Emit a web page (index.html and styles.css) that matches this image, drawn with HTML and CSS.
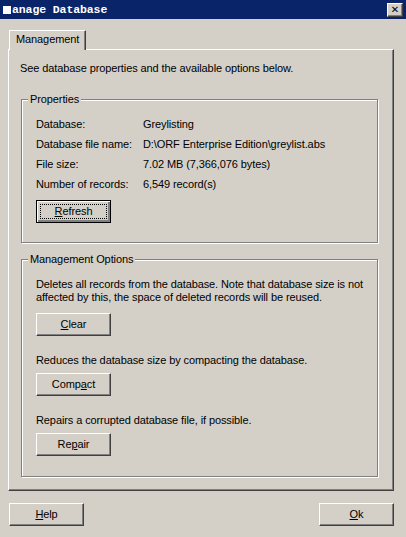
FILE: index.html
```html
<!DOCTYPE html>
<html>

<head>
    <meta charset="utf-8">
    <title>Manage Database</title>
    <link rel="stylesheet" href="styles.css">
</head>

<body>
    <div class="titlebar">
        <span class="title"><span class="cap">M</span>anage Database</span>
        <span class="close">&#x2715;</span>
    </div>

    <div class="dialog">
        <div class="tabs">
            <div class="tab">Management</div>
        </div>

        <div class="panel">
            <p class="intro">See database properties and the available options below.</p>

            <div class="group props">
                <span class="group-title">Properties</span>
                <div class="row"><span class="label">Database:</span><span>Greylisting</span></div>
                <div class="row"><span class="label">Database file name:</span><span>D:\ORF Enterprise Edition\greylist.abs</span></div>
                <div class="row"><span class="label">File size:</span><span>7.02 MB (7,366,076 bytes)</span></div>
                <div class="row"><span class="label">Number of records:</span><span>6,549 record(s)</span></div>
                <button class="btn default"><span class="focus"><u>R</u>efresh</span></button>
            </div>

            <div class="group options">
                <span class="group-title">Management Options</span>
                <p class="desc first">Deletes all records from the database. Note that database size is not<br>affected by this, the space of deleted records will be reused.</p>
                <button class="btn btn-clear"><u>C</u>lear</button>
                <p class="desc">Reduces the database size by compacting the database.</p>
                <button class="btn">Comp<u>a</u>ct</button>
                <p class="desc">Repairs a corrupted database file, if possible.</p>
                <button class="btn">Re<u>p</u>air</button>
            </div>
        </div>

        <div class="footer">
            <button class="btn"><u>H</u>elp</button>
            <button class="btn"><u>O</u>k</button>
        </div>
    </div>
</body>

</html>
```

FILE: styles.css
```css
/* classic windows dialog colours */
:root {
    --face: #d4d0c8;
    --light: #ffffff;
    --shadow: #808080;
    --dark: #404040;
    --caption: #0a246a;
}

body {
    margin: 0;
    background-color: var(--face);
    font-family: "Liberation Sans", Arial, sans-serif;
    font-size: 11px;
    line-height: 13px;
    letter-spacing: -0.1px;
    color: #000;
}

p {
    margin: 0;
}

.titlebar {
    height: 19px;
    background-color: var(--caption);
    display: flex;
    align-items: center;
    justify-content: space-between;
    padding: 0 3px 0 3px;
}

.title {
    font-family: "Liberation Mono", monospace;
    font-weight: bold;
    font-size: 11.5px;
    color: #fff;
    letter-spacing: -0.1px;
}

.title .cap {
    display: inline-block;
    width: 8px;
    height: 8px;
    line-height: 8px;
    margin-right: 1px;
    background-color: #fff;
    color: #fff;
}

.close {
    width: 14px;
    height: 12px;
    background-color: var(--face);
    border: 1px solid;
    border-color: var(--light) var(--dark) var(--dark) var(--light);
    box-shadow: inset -1px -1px var(--shadow);
    font-size: 10px;
    line-height: 12px;
    font-weight: bold;
    text-align: center;
    font-family: "DejaVu Sans", sans-serif;
}

.dialog {
    padding: 11px 12px 0 8px;
}

.tabs {
    display: flex;
    padding-left: 1px;
}

.tab {
    position: relative;
    width: 77px;
    box-sizing: border-box;
    height: 20px;
    padding: 2px 0 0 6px;
    margin-bottom: -1px;
    background-color: var(--face);
    border: 1px solid;
    border-bottom: none;
    border-color: var(--light) var(--dark) transparent var(--light);
    box-shadow: inset -1px 0 var(--shadow);
}

.panel {
    height: 442px;
    box-sizing: border-box;
    border: 1px solid;
    border-color: var(--light) var(--dark) var(--dark) var(--light);
    box-shadow: inset -1px -1px var(--shadow);
    padding-top: 12px;
}

.intro {
    padding-left: 11px;
}

.group {
    margin: 24px 15px 0 12px;
    border: 1px solid var(--shadow);
    box-shadow: inset 1px 1px var(--light), 1px 1px var(--light);
    padding: 0 0 0 14px;
}

.group-title {
    display: block;
    width: fit-content;
    height: 13px;
    margin: -7px 0 0 -8px;
    padding: 0 2px;
    background-color: var(--face);
}

.props {
    padding-bottom: 19px;
}

.options {
    margin-top: 16px;
    padding-bottom: 20px;
}

.row {
    display: flex;
    height: 20px;
    line-height: 20px;
}

.row:first-of-type {
    margin-top: 8px;
}

.label {
    width: 107px;
}

.btn {
    display: block;
    width: 75px;
    height: 23px;
    box-sizing: border-box;
    padding: 0;
    font: inherit;
    letter-spacing: inherit;
    color: #000;
    background-color: var(--face);
    border: 1px solid;
    border-color: var(--light) var(--dark) var(--dark) var(--light);
    box-shadow: inset -1px -1px var(--shadow);
    text-align: center;
}

.props .btn {
    margin-top: 6px;
}

.btn.default {
    border: 1px solid #000;
    box-shadow: inset 1px 1px var(--light), inset -2px -2px var(--shadow);
    padding: 3px;
}

.btn .focus {
    display: block;
    height: 100%;
    box-sizing: border-box;
    border: 1px dotted #000;
    line-height: 13px;
}

.options .btn {
    margin-top: 6px;
}

.options .desc {
    margin-top: 18px;
}

.options .desc.first {
    margin-top: 12px;
}

.options .btn-clear {
    margin-top: 9px;
}

.footer {
    display: flex;
    justify-content: space-between;
    padding: 12px 0 0 1px;
}
```
